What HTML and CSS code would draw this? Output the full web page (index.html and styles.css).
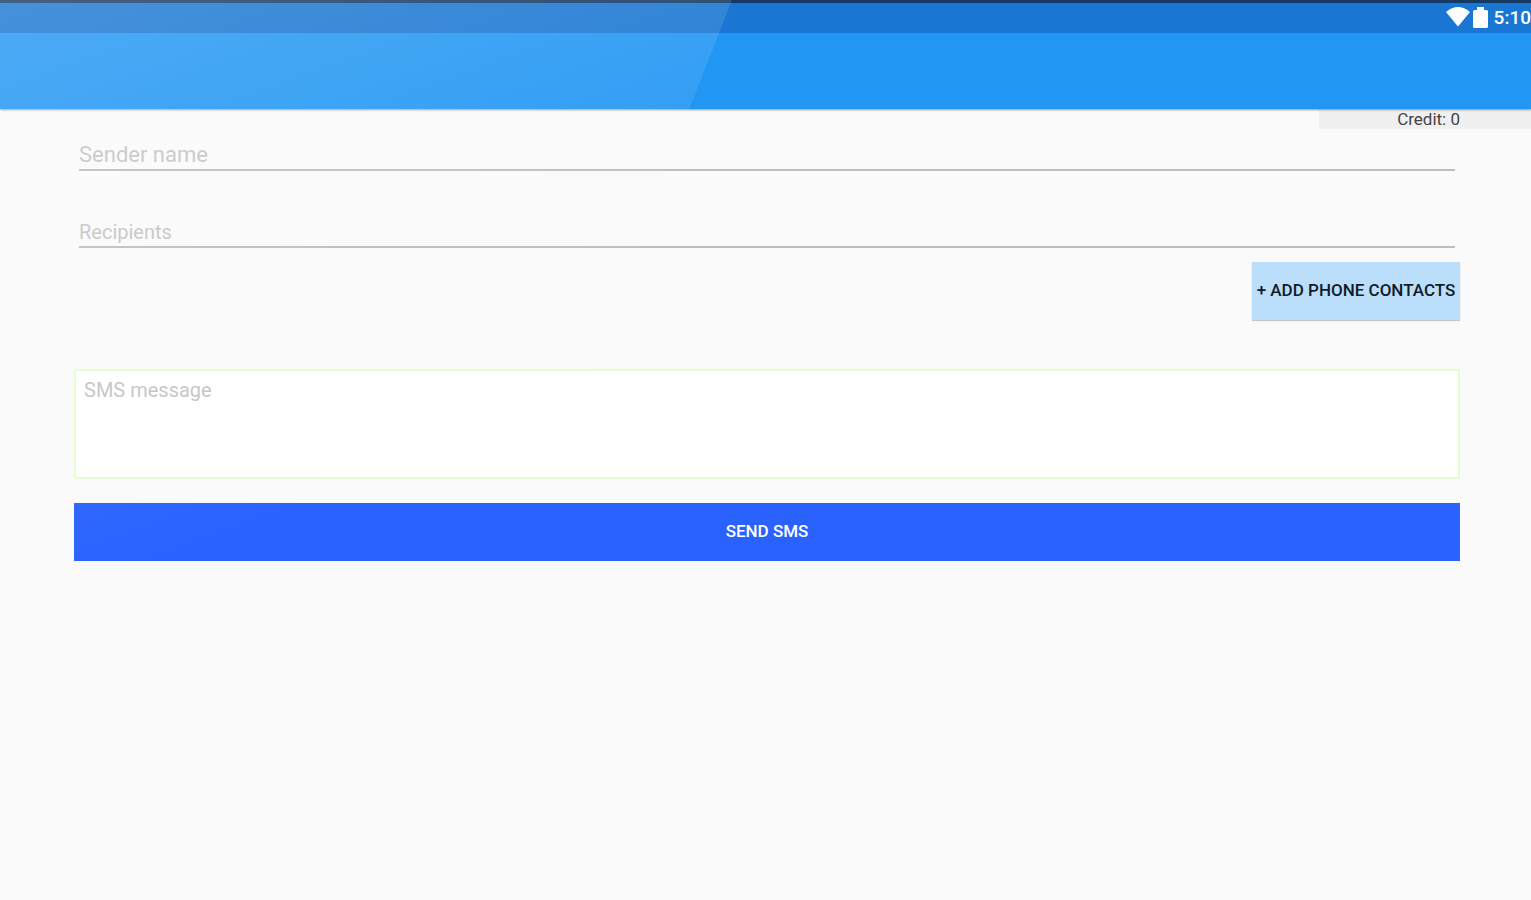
FILE: index.html
```
<!DOCTYPE html>
<html lang="en">
    <head>
        <meta charset="UTF-8" />
        <meta name="viewport" content="width=device-width, initial-scale=1.0" />
        <title>Send SMS</title>
        <link rel="stylesheet" href="styles.css">
    </head>
    <body>
        <header class="header">
            <div class="status-bar">
                <svg class="wifi" viewBox="0 0 24 20" aria-hidden="true">
                    <path d="M0 5C4 1.500 8 0 12 0s8 1.500 12 5L12 19.500z" />
                </svg>
                <svg class="battery" viewBox="0 0 15 21" aria-hidden="true">
                    <path d="M4 0h7v3h2.500q1.500 0 1.500 1.500v15q0 1.500-1.500 1.500h-12Q0 21 0 19.500v-15Q0 3 1.500 3H4z" />
                </svg>
                <span class="time">5:10</span>
            </div>
            <div class="toolbar"></div>
        </header>

        <div class="credit">Credit: 0</div>

        <form class="sms-form">
            <input class="field sender" type="text" placeholder="Sender name" aria-label="Sender name" />
            <input class="field recipients" type="text" placeholder="Recipients" aria-label="Recipients" />
            <button class="btn add-contacts" type="button">+ Add phone contacts</button>
            <textarea class="message" placeholder="SMS message" aria-label="SMS message"></textarea>
            <button class="btn send" type="button">Send SMS</button>
        </form>

        <div class="glare"></div>
    </body>
</html>
```

FILE: styles.css
```
:root {
    --primary: #2196f3;
    --primary-dark: #1976d2;
    --accent: #2962ff;
    --hint: #c4c4c4;
    --side: 71px;
}

* {
    box-sizing: border-box;
}

body {
    margin: 0;
    min-height: 100vh;
    position: relative;
    background-color: #fafafa;
    font-family: Roboto, "Liberation Sans", sans-serif;
}

/* Header */
.header {
    border-top: 3px solid #143a63;
    background-color: var(--primary);
    box-shadow: 0 1px 2px rgba(0, 0, 0, 0.4);
    position: relative;
}

.status-bar {
    display: flex;
    justify-content: flex-end;
    align-items: center;
    height: 30px;
    padding-bottom: 2px;
    background-color: var(--primary-dark);
    color: #fff;
}

.status-bar svg {
    fill: #fff;
}

.wifi {
    width: 24px;
    height: 20px;
    margin-right: 3px;
}

.battery {
    width: 15px;
    height: 21px;
    margin-right: 6px;
}

.time {
    font-size: 19px;
    font-weight: 500;
}

.toolbar {
    height: 76px;
}

/* Credit */
.credit {
    width: 212px;
    height: 20px;
    margin-left: auto;
    padding-right: var(--side);
    background-color: #f0f0f0;
    color: #444;
    font-size: 17px;
    line-height: 20px;
    text-align: right;
}

/* Form */
.sms-form {
    display: flex;
    flex-direction: column;
    padding: 0 var(--side) 0 74px;
}

.field {
    height: 42px;
    margin: 0 5px;
    padding: 11px 0 0;
    border: 0;
    border-bottom: 2px solid #bdbdbd;
    background: transparent;
    font-family: inherit;
    outline: none;
}

.sender {
    font-size: 22px;
}

.recipients {
    margin-top: 35px;
    font-size: 20px;
}

.field::placeholder,
.message::placeholder {
    color: var(--hint);
    opacity: 1;
}

.btn {
    height: 58px;
    padding: 0 4px 2px;
    border: 0;
    font-family: inherit;
    font-size: 17px;
    font-weight: 500;
    text-transform: uppercase;
    white-space: nowrap;
    cursor: pointer;
}

.add-contacts {
    align-self: flex-end;
    min-width: 208px;
    margin-top: 14px;
    background-color: #bbdefb;
    box-shadow: 0 1px 1px rgba(0, 0, 0, 0.2);
    color: #111c28;
}

.message {
    height: 110px;
    margin-top: 49px;
    padding: 7px 8px;
    border: 2px solid #e6fcd0;
    background-color: #fff;
    font-family: inherit;
    font-size: 20px;
    line-height: 24px;
    resize: none;
    outline: none;
}

.send {
    margin-top: 24px;
    background-color: var(--accent);
    color: #fff;
}

/* Diagonal light reflection over the screen */
.glare {
    position: absolute;
    inset: 0;
    background: linear-gradient(160deg, rgba(255, 255, 255, 0.2), rgba(255, 255, 255, 0) 43%);
    clip-path: polygon(0 0, 732px 0, 380px 100%, 0 100%);
    pointer-events: none;
}
```
